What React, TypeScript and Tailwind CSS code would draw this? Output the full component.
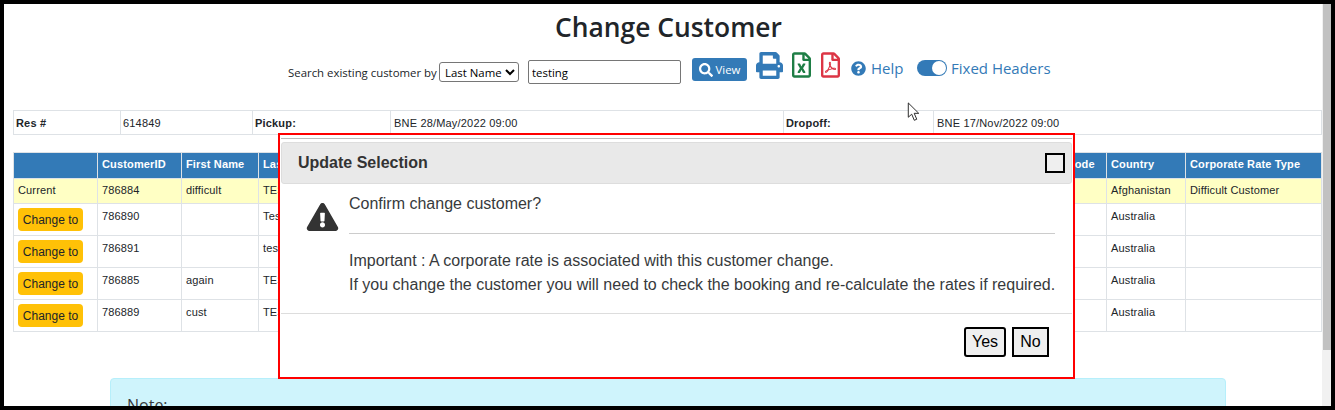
import { FaExclamationTriangle, FaPrint, FaQuestionCircle, FaRegFileExcel, FaRegFilePdf, FaSearch } from 'react-icons/fa'

const CELL = 'border border-[#dee2e6] px-[4px]'

const ROWS = [
    { id: '786890', first: '', last: 'Test' },
    { id: '786891', first: '', last: 'testing' },
    { id: '786885', first: 'again', last: 'TEST' },
    { id: '786889', first: 'cust', last: 'TEST' },
]

function Toolbar() {
    return (
        <div className="flex items-start pl-[284px] h-[34px] font-['Open_Sans',sans-serif]">
            <span className="text-[11.4px] leading-[16px] text-[#212529] mt-[19px] mr-[3px] w-[148px] whitespace-nowrap">Search existing customer by</span>
            <select
                defaultValue="Last Name"
                className="mt-[16px] w-[80px] h-[20px] border border-[#767676] rounded-[3px] bg-white text-[11.4px] text-black pl-[1px] font-['Open_Sans',sans-serif]"
            >
                <option>Last Name</option>
            </select>
            <input
                defaultValue="testing"
                className="ml-[9px] mt-[14px] w-[153px] h-[24px] border border-[#767676] rounded-[2px] px-[3px] text-[11.4px] text-black"
            />
            <button className="ml-[11px] mt-[12px] flex items-center justify-center gap-[3px] w-[55px] h-[23px] rounded-[3px] bg-[#337ab7] text-white text-[11.4px]">
                <FaSearch className="size-[14px]" />
                View
            </button>
            <FaPrint className="ml-[9px] mt-[6px] size-[27px] text-[#337ab7]" />
            <FaRegFileExcel className="ml-[9px] mt-[6px] h-[26px] w-[19px] text-[#1e7e45]" />
            <FaRegFilePdf className="ml-[10px] mt-[6px] h-[26px] w-[19px] text-[#dc3545]" />
            <FaQuestionCircle className="ml-[11px] mt-[15px] size-[15px] text-[#337ab7]" />
            <span className="ml-[5px] mt-[12px] w-[32px] text-[15px] leading-[20px] text-[#337ab7]">Help</span>
            <div className="ml-[14px] mt-[14px] w-[30px] h-[16px] rounded-full bg-[#337ab7] flex justify-end items-center pr-[1px]">
                <div className="size-[14px] rounded-full bg-white" />
            </div>
            <span className="ml-[4px] mt-[12px] text-[15px] leading-[20px] text-[#337ab7]">Fixed Headers</span>
        </div>
    )
}

function InfoTable() {
    return (
        <table className="table-fixed border-collapse w-[1309px] ml-[9px] mt-[30px] text-[11px] tracking-[0.18px] text-[#212529] font-['Liberation_Sans',sans-serif]">
            <colgroup>
                <col className="w-[107px]" />
                <col className="w-[132px]" />
                <col className="w-[138px]" />
                <col className="w-[393px]" />
                <col className="w-[150px]" />
                <col />
            </colgroup>
            <tbody>
                <tr className="h-[24px]">
                    <td className="border border-[#dee2e6] px-[2px] pt-[1px] align-middle font-bold">Res #</td>
                    <td className="border border-[#dee2e6] px-[2px] pt-[1px] align-middle">614849</td>
                    <td className="border border-[#dee2e6] px-[2px] pt-[1px] align-middle font-bold">Pickup:</td>
                    <td className="border border-[#dee2e6] px-[3px] pt-[1px] align-middle">BNE 28/May/2022 09:00</td>
                    <td className="border border-[#dee2e6] px-[2px] pt-[1px] align-middle font-bold">Dropoff:</td>
                    <td className="border border-[#dee2e6] px-[3px] pt-[1px] align-middle">BNE 17/Nov/2022 09:00</td>
                </tr>
            </tbody>
        </table>
    )
}

function CustomerTable() {
    return (
        <table className="table-fixed border-collapse w-[1309px] ml-[9px] mt-[17px] text-[11px] tracking-[0.15px] text-[#212529] font-['Liberation_Sans',sans-serif]">
            <colgroup>
                <col className="w-[84px]" />
                <col className="w-[84px]" />
                <col className="w-[77px]" />
                <col className="w-[200px]" />
                <col className="w-[250px]" />
                <col className="w-[200px]" />
                <col className="w-[129px]" />
                <col className="w-[69px]" />
                <col className="w-[79px]" />
                <col />
            </colgroup>
            <thead>
                <tr className="h-[26px] bg-[#337ab7] text-white font-bold text-left">
                    <th className={CELL + ' align-middle pb-[2px]'}></th>
                    <th className={CELL + ' align-middle pb-[2px]'}>CustomerID</th>
                    <th className={CELL + ' align-middle pb-[2px]'}>First Name</th>
                    <th className={CELL + ' align-middle pb-[2px]'}>Last Name</th>
                    <th className={CELL + ' align-middle pb-[2px]'}>Address</th>
                    <th className={CELL + ' align-middle pb-[2px]'}>City</th>
                    <th className={CELL + ' align-middle pb-[2px]'}>State</th>
                    <th className={CELL + ' align-middle pb-[2px] pl-[6px]'}>Postcode</th>
                    <th className={CELL + ' align-middle pb-[2px]'}>Country</th>
                    <th className={CELL + ' align-middle pb-[2px]'}>Corporate Rate Type</th>
                </tr>
            </thead>
            <tbody>
                <tr className="h-[25px] bg-[#ffffc4]">
                    <td className={CELL + ' align-middle pb-[2px]'}>Current</td>
                    <td className={CELL + ' align-middle pb-[2px]'}>786884</td>
                    <td className={CELL + ' align-middle pb-[2px]'}>difficult</td>
                    <td className={CELL + ' align-middle pb-[2px]'}>TEST</td>
                    <td className={CELL}></td>
                    <td className={CELL}></td>
                    <td className={CELL}></td>
                    <td className={CELL}></td>
                    <td className={CELL + ' align-middle pb-[2px]'}>Afghanistan</td>
                    <td className={CELL + ' align-middle pb-[2px]'}>Difficult Customer</td>
                </tr>
                {ROWS.map((row) => (
                    <tr key={row.id} className="h-[32px]">
                        <td className={CELL + ' align-top py-[4px]'}>
                            <button className="block w-[65px] h-[23px] rounded-[4px] bg-[#ffc107] text-[12px] tracking-normal text-[#212529]">Change to</button>
                        </td>
                        <td className={CELL + ' align-top pt-[4px]'}>{row.id}</td>
                        <td className={CELL + ' align-top pt-[4px]'}>{row.first}</td>
                        <td className={CELL + ' align-top pt-[4px]'}>{row.last}</td>
                        <td className={CELL}></td>
                        <td className={CELL}></td>
                        <td className={CELL}></td>
                        <td className={CELL}></td>
                        <td className={CELL + ' align-top pt-[4px]'}>Australia</td>
                        <td className={CELL}></td>
                    </tr>
                ))}
            </tbody>
        </table>
    )
}

function ConfirmDialog() {
    return (
        <div className="absolute left-[274px] top-[129px] w-[797px] h-[246px] border-2 border-[#ff0000] bg-white px-[1px] pt-[3px] font-['Liberation_Sans',sans-serif] text-[#373a3c]">
            <div className="border-t border-[#bbbbbb] h-[1px]" />
            <div className="mt-[3px] h-[42px] bg-[#e9e9e9] border border-[#dddddd] rounded-[3px] flex items-center justify-between pl-[16px] pr-[6px]">
                <span className="text-[16px] font-bold text-[#333333]">Update Selection</span>
                <span className="size-[20px] border-2 border-black bg-[#efefef]" />
            </div>
            <div className="flex pl-[25px] pr-[17px] h-[130px] border-b border-[#dddddd]">
                <FaExclamationTriangle className="mt-[19px] h-[28px] w-[33px] text-[#333333] shrink-0" />
                <div className="ml-[10px] flex-1 text-[16px] leading-[24px]">
                    <p className="mt-[8px]">Confirm change customer?</p>
                    <div className="mt-[17px] border-t border-[#cccccc]" />
                    <p className="mt-[15px] whitespace-nowrap">Important : A corporate rate is associated with this customer change.</p>
                    <p className="whitespace-nowrap">If you change the customer you will need to check the booking and re-calculate the rates if required.</p>
                </div>
            </div>
            <div className="flex justify-end gap-[6px] pt-[13px] pr-[23px] text-[16px] text-black">
                <button className="w-[42px] h-[30px] border-2 border-black rounded-[3px] bg-[#efefef]">Yes</button>
                <button className="w-[37px] h-[30px] border-2 border-black bg-[#efefef]">No</button>
            </div>
        </div>
    )
}

export default function App() {
    return (
        <div className="w-[1335px] h-[410px] border-x-4 border-y-4 border-black flex overflow-hidden bg-white">
            <div className="relative w-[1318px] h-[402px] overflow-hidden">
                <h1 className="pt-[4px] pl-[551px] text-[26.4px] leading-[38px] font-semibold text-[#212529] font-['Open_Sans',sans-serif]">
                    Change Customer
                </h1>
                <Toolbar />
                <InfoTable />
                <CustomerTable />
                <div className="ml-[106px] mt-[46px] w-[1116px] h-[60px] border border-[#b6effb] rounded-[4px] bg-[#cff4fc] px-[16px] pt-[14px] text-[16px] text-[#373a3c] font-['Open_Sans',sans-serif]">
                    Note:
                </div>
                <ConfirmDialog />
                <svg className="absolute left-[903px] top-[98px] w-[14px] h-[20px]" viewBox="0 0 14 21">
                    <path d="M1 1v15l3.6-3.2 2.7 6.4 2.6-1.1-2.7-6.2H12z" fill="#fff" stroke="#222" strokeWidth="1" />
                </svg>
            </div>
            <div className="w-[9px] h-[402px] bg-[#f1f1f1]">
                <div className="h-[346px] ml-[1px] bg-[#c1c1c1]" />
            </div>
        </div>
    )
}
